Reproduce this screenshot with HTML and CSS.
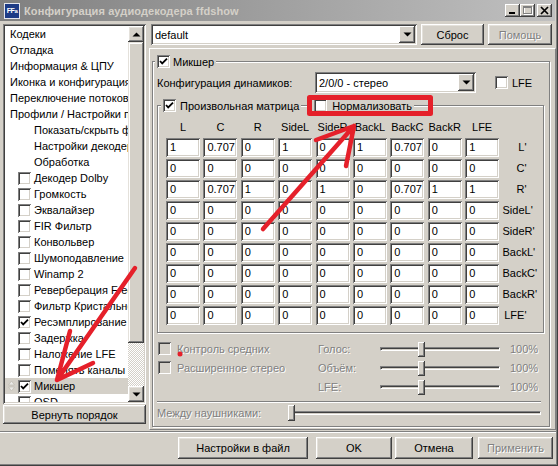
FILE: index.html
```html
<!DOCTYPE html>
<html lang="ru">
<head>
<meta charset="utf-8">
<title>Конфигурация аудиодекодера ffdshow</title>
<link rel="stylesheet" href="styles.css">
</head>
<body>
<div class="window">
  <div class="titlebar">
    <span class="appicon">FF<span class="appicon-a">a</span></span>
    <span class="title">Конфигурация аудиодекодера ffdshow</span>
    <span class="capbtns">
      <span class="capbtn"><svg width="15" height="13" viewBox="0 0 15 13"><rect x="4" y="8" width="6" height="2" fill="#000"/></svg></span>
      <span class="capbtn"><svg width="15" height="13" viewBox="0 0 15 13"><rect x="4.5" y="3.5" width="8" height="7" fill="none" stroke="#fff"/><rect x="3.5" y="2.5" width="8" height="7" fill="none" stroke="#808080"/><rect x="3" y="3" width="9" height="1" fill="#808080"/></svg></span>
      <span class="capbtn close"><svg width="15" height="13" viewBox="0 0 15 13"><path d="M4 3 L11 10 M11 3 L4 10" stroke="#000" stroke-width="1.7"/></svg></span>
    </span>
  </div>

  <div class="main">
    <div class="left">
      <div class="listbox">
        <div class="list">
          <div class="row">Кодеки</div>
          <div class="row">Отладка</div>
          <div class="row">Информация &amp; ЦПУ</div>
          <div class="row">Иконка и конфигурация</div>
          <div class="row">Переключение потоков</div>
          <div class="row">Профили / Настройки пресетов</div>
          <div class="row ind">Показать/скрыть фильтры</div>
          <div class="row ind">Настройки декодера</div>
          <div class="row ind">Обработка</div>
          <div class="row chk"><span class="cb"></span><span>Декодер Dolby</span></div>
          <div class="row chk"><span class="cb"></span><span>Громкость</span></div>
          <div class="row chk"><span class="cb"></span><span>Эквалайзер</span></div>
          <div class="row chk"><span class="cb"></span><span>FIR Фильтр</span></div>
          <div class="row chk"><span class="cb"></span><span>Конвольвер</span></div>
          <div class="row chk"><span class="cb"></span><span>Шумоподавление</span></div>
          <div class="row chk"><span class="cb"></span><span>Winamp 2</span></div>
          <div class="row chk"><span class="cb"></span><span>Реверберация Freeverb</span></div>
          <div class="row chk"><span class="cb"></span><span>Фильтр Кристальности</span></div>
          <div class="row chk"><span class="cb"><svg width="13" height="13" viewBox="0 0 13 13"><path d="M3 6 L5.2 8.4 L10 3.6" fill="none" stroke="#000" stroke-width="1.8"/></svg></span><span>Ресэмплирование</span></div>
          <div class="row chk"><span class="cb"></span><span>Задержка</span></div>
          <div class="row chk"><span class="cb"></span><span>Наложение LFE</span></div>
          <div class="row chk"><span class="cb"></span><span>Поменять каналы местами</span></div>
          <div class="row chk sel"><svg class="grip" width="7" height="14" viewBox="0 0 7 14"><path d="M0.5 6 L3.5 2 L6.5 6 Z M0.5 8 L3.5 12 L6.5 8 Z" fill="#ecebe8" stroke="#bdbab2" stroke-width="0.7"/></svg><span class="cb"><svg width="13" height="13" viewBox="0 0 13 13"><path d="M3 6 L5.2 8.4 L10 3.6" fill="none" stroke="#000" stroke-width="1.8"/></svg></span><span>Микшер</span></div>
          <div class="row chk"><span class="cb"></span><span>OSD</span></div>
        </div>
        <div class="vscroll">
          <div class="sbtn"><svg width="9" height="5" viewBox="0 0 9 5"><path d="M0.5 4.5 L4.5 0.5 L8.5 4.5 Z" fill="#000"/></svg></div>
          <div class="thumb"></div>
          <div class="track"></div>
          <div class="sbtn"><svg width="9" height="5" viewBox="0 0 9 5"><path d="M0.5 0.5 L4.5 4.5 L8.5 0.5 Z" fill="#000"/></svg></div>
        </div>
      </div>
      <div class="btn reorder">Вернуть порядок</div>
    </div>

    <div class="right">
      <div class="toprow">
        <div class="combo preset"><span class="combo-text">default</span><span class="ddbtn"><svg width="9" height="5" viewBox="0 0 9 5"><path d="M0.5 0.5 L4.5 4.5 L8.5 0.5 Z" fill="#000"/></svg></span></div>
        <div class="btn reset">Сброс</div>
        <div class="btn help dis">Помощь</div>
      </div>

      <div class="panel">
        <fieldset class="group mixer">
          <legend class="lg"><span class="lgin"><span class="cb"><svg width="13" height="13" viewBox="0 0 13 13"><path d="M3 6 L5.2 8.4 L10 3.6" fill="none" stroke="#000" stroke-width="1.8"/></svg></span><span>Микшер</span></span></legend>

          <div class="speakers">
            <span class="spk-label">Конфигурация динамиков:</span>
            <div class="combo spk-combo"><span class="combo-text">2/0/0 - стерео</span><span class="ddbtn"><svg width="9" height="5" viewBox="0 0 9 5"><path d="M0.5 0.5 L4.5 4.5 L8.5 0.5 Z" fill="#000"/></svg></span></div>
            <span class="lfe"><span class="cb"></span><span>LFE</span></span>
          </div>

          <fieldset class="group matrix-group">
            <legend class="lg lg2"><span class="lgin">
              <span class="lg-item first"><span class="cb"><svg width="13" height="13" viewBox="0 0 13 13"><path d="M3 6 L5.2 8.4 L10 3.6" fill="none" stroke="#000" stroke-width="1.8"/></svg></span><span>Произвольная матрица</span></span>
              <span class="lg-line"></span>
              <span class="lg-item second"><span class="cb"></span><span>Нормализовать</span></span>
            </span></legend>

            <div class="matrix">
              <div class="mh">L</div><div class="mh">C</div><div class="mh">R</div><div class="mh">SideL</div><div class="mh">SideR</div><div class="mh">BackL</div><div class="mh">BackC</div><div class="mh">BackR</div><div class="mh">LFE</div><div></div>

              <div class="ed">1</div><div class="ed">0.707</div><div class="ed">0</div><div class="ed">1</div><div class="ed">0</div><div class="ed">1</div><div class="ed">0.707</div><div class="ed">0</div><div class="ed">1</div><div class="rl">L'</div>
              <div class="ed">0</div><div class="ed">0</div><div class="ed">0</div><div class="ed">0</div><div class="ed">0</div><div class="ed">0</div><div class="ed">0</div><div class="ed">0</div><div class="ed">0</div><div class="rl">C'</div>
              <div class="ed">0</div><div class="ed">0.707</div><div class="ed">1</div><div class="ed">0</div><div class="ed">1</div><div class="ed">0</div><div class="ed">0.707</div><div class="ed">1</div><div class="ed">1</div><div class="rl">R'</div>
              <div class="ed">0</div><div class="ed">0</div><div class="ed">0</div><div class="ed">0</div><div class="ed">0</div><div class="ed">0</div><div class="ed">0</div><div class="ed">0</div><div class="ed">0</div><div class="rl">SideL'</div>
              <div class="ed">0</div><div class="ed">0</div><div class="ed">0</div><div class="ed">0</div><div class="ed">0</div><div class="ed">0</div><div class="ed">0</div><div class="ed">0</div><div class="ed">0</div><div class="rl">SideR'</div>
              <div class="ed">0</div><div class="ed">0</div><div class="ed">0</div><div class="ed">0</div><div class="ed">0</div><div class="ed">0</div><div class="ed">0</div><div class="ed">0</div><div class="ed">0</div><div class="rl">BackL'</div>
              <div class="ed">0</div><div class="ed">0</div><div class="ed">0</div><div class="ed">0</div><div class="ed">0</div><div class="ed">0</div><div class="ed">0</div><div class="ed">0</div><div class="ed">0</div><div class="rl">BackC'</div>
              <div class="ed">0</div><div class="ed">0</div><div class="ed">0</div><div class="ed">0</div><div class="ed">0</div><div class="ed">0</div><div class="ed">0</div><div class="ed">0</div><div class="ed">0</div><div class="rl">BackR'</div>
              <div class="ed">0</div><div class="ed">0</div><div class="ed">0</div><div class="ed">0</div><div class="ed">0</div><div class="ed">0</div><div class="ed">0</div><div class="ed">0</div><div class="ed">0</div><div class="rl">LFE'</div>
            </div>
          </fieldset>

          <div class="opts">
            <span class="optc"><span class="cb cbdis"></span><span class="dis">Контроль средних</span></span>
            <span class="dis">Голос:</span>
            <span class="slider"><span class="strack"></span><span class="sthumb" style="left:38px"></span></span>
            <span class="dis pct">100%</span>

            <span class="optc"><span class="cb cbdis"></span><span class="dis">Расширенное стерео</span></span>
            <span class="dis">Объём:</span>
            <span class="slider"><span class="strack"></span><span class="sthumb" style="left:38px"></span></span>
            <span class="dis pct">100%</span>

            <span></span>
            <span class="dis">LFE:</span>
            <span class="slider"><span class="strack"></span><span class="sthumb" style="left:38px"></span></span>
            <span class="dis pct">100%</span>
          </div>

          <div class="hsep"></div>

          <div class="hp-row">
            <span class="dis hp-label">Между наушниками:</span>
            <span class="slider hp-slider"><span class="strack"></span><span class="sthumb hp-thumb" style="left:0px"></span></span>
          </div>
        </fieldset>
      </div>
    </div>
  </div>

  <div class="sep"></div>

  <div class="footer">
    <div class="btn fbtn save">Настройки в файл</div>
    <div class="btn fbtn ok">OK</div>
    <div class="btn fbtn cancel">Отмена</div>
    <div class="btn fbtn apply dis">Применить</div>
  </div>

  <svg class="annot" width="558" height="466" viewBox="0 0 558 466">
    <g fill="none" stroke="#e5202a" stroke-linecap="round" stroke-linejoin="round">
      <rect x="309.5" y="97.5" width="121" height="16" stroke-width="5"/>
      <path d="M135 268 L57 380 M57 380 L70 331 M57 380 L93 363" stroke-width="4.5"/>
      <path d="M263 229 L354 126 M354 126 L316 140 M354 126 L346 166" stroke-width="4.5"/>
    </g>
    <circle cx="180" cy="354" r="2.5" fill="#e5202a"/>
  </svg>
</div>
</body>
</html>
```

FILE: styles.css
```css
* { box-sizing: border-box; }
html, body { margin: 0; padding: 0; }
body {
  width: 558px; height: 466px; overflow: hidden;
  background: #d4d0c8;
  font-family: "Liberation Sans", Arial, sans-serif;
  font-size: 11px; color: #000;
}
.window {
  position: relative; width: 558px; height: 466px;
  background: #d4d0c8;
  box-shadow: inset -1px -1px #404040, inset -2px -2px #808080;
  display: flex; flex-direction: column;
}

/* title bar */
.titlebar {
  flex: none; height: 21px; margin-right: 3px;
  display: flex; align-items: center;
  background: linear-gradient(90deg, #808080, #c0c0c0);
}
.appicon {
  width: 16px; height: 16px; margin-left: 4px; flex: none;
  background: #1d3b86; border: 1px solid #e4e6ee; color: #fff;
  font: bold 7px/14px "Liberation Sans", Arial, sans-serif;
  text-align: center; letter-spacing: -0.4px;
}
.appicon-a { font-size: 6px; }
.title { margin-left: 4px; font-weight: bold; color: #d4d0c8; white-space: nowrap; letter-spacing: 0.1px; }
.capbtns { margin-left: auto; margin-right: 3px; display: flex; }
.capbtn {
  width: 15px; height: 13px; display: flex; background: #d4d0c8;
  box-shadow: inset -1px -1px #404040, inset 1px 1px #fff, inset -2px -2px #808080;
}
.capbtn.close { margin-left: 2px; }

/* common widgets */
.btn {
  flex: none; display: flex; align-items: center; justify-content: center;
  white-space: nowrap; background: #d4d0c8;
  box-shadow: inset -1px -1px #404040, inset 1px 1px #fff, inset -2px -2px #808080, inset 2px 2px #e4e1db;
}
.dis { color: #808080; text-shadow: 1px 1px #fff; }
.cb {
  flex: none; width: 13px; height: 13px; display: inline-flex; background: #fff;
  box-shadow: inset 1px 1px #808080, inset -1px -1px #fff, inset 2px 2px #404040, inset -2px -2px #d4d0c8;
}
.cb.cbdis { background: #d4d0c8; }
.combo {
  display: flex; align-items: center; height: 21px; padding: 2px;
  background: #fff;
  box-shadow: inset 1px 1px #808080, inset -1px -1px #fff, inset 2px 2px #404040, inset -2px -2px #d4d0c8;
}
.combo-text { flex: 1; padding-left: 2px; white-space: nowrap; overflow: hidden; }
.ddbtn {
  flex: none; width: 16px; height: 17px; display: flex; align-items: center; justify-content: center;
  background: #d4d0c8;
  box-shadow: inset -1px -1px #404040, inset 1px 1px #fff, inset -2px -2px #808080;
}

/* main area */
.main { flex: none; display: flex; height: 409px; padding: 3px 0 0 3px; }

.left { width: 143px; display: flex; flex-direction: column; }
.listbox {
  height: 380px; display: flex; padding: 2px; background: #fff;
  box-shadow: inset 1px 1px #808080, inset -1px -1px #fff, inset 2px 2px #404040, inset -2px -2px #d4d0c8;
}
.list { flex: 1; min-width: 0; overflow: hidden; }
.row {
  height: 16px; display: flex; align-items: center; gap: 3px;
  padding-left: 5px; white-space: nowrap;
}
.row.ind { padding-left: 29px; }
.row.chk { padding-left: 13px; }
.row.sel { background: #d4d0c8; padding-left: 3px; }
.grip { flex: none; }
.vscroll { width: 16px; flex: none; display: flex; flex-direction: column; }
.sbtn {
  flex: none; height: 16px; display: flex; align-items: center; justify-content: center;
  background: #d4d0c8;
  box-shadow: inset -1px -1px #404040, inset 1px 1px #fff, inset -2px -2px #808080, inset 2px 2px #e4e1db;
}
.thumb {
  flex: none; height: 301px; background: #d4d0c8;
  box-shadow: inset -1px -1px #404040, inset 1px 1px #e4e1db, inset -2px -2px #808080, inset 2px 2px #fff;
}
.track {
  flex: 1;
  background: conic-gradient(#fff 25%, #d4d0c8 0 50%, #fff 0 75%, #d4d0c8 0);
  background-size: 2px 2px;
}
.reorder { margin-top: 1px; height: 19px; }

.right { width: 407px; margin-left: 3px; display: flex; flex-direction: column; }
.toprow { display: flex; height: 21px; padding-left: 2px; }
.preset { width: 266px; }
.reset { width: 63px; margin-left: 4px; height: 21px; }
.help { width: 64px; margin-left: 4px; height: 21px; }

.panel {
  margin-top: 3px; height: 382px;
  border: 1px solid; border-color: #fff #808080 #808080 #fff;
  padding: 6px 0 0 2px;
}
.group {
  margin: 0; min-width: 0;
  border: 1px solid #808080;
  box-shadow: inset 1px 1px #fff, 1px 1px #fff;
}
.mixer { width: 398px; padding: 0 5px 4px 4px; }
.lg { padding: 0 2px; margin-left: -2px; background: #d4d0c8; height: 13px; }
.lgin { display: flex; align-items: center; gap: 3px; height: 13px; white-space: nowrap; }

.speakers { display: flex; align-items: center; margin-top: 4px; height: 21px; }
.spk-label { width: 158px; flex: none; white-space: nowrap; }
.spk-combo { width: 161px; flex: none; }
.lfe { margin-left: 19px; display: flex; align-items: center; gap: 4px; }

.matrix-group { margin-top: 6px; width: 387px; padding: 0 0 7px 8px; }
.lg2 { margin-left: -5px; padding: 0; background: transparent; }
.lg2 .lgin { gap: 0; align-items: flex-start; width: 253px; }
.lg-item { flex: none; display: flex; align-items: center; height: 13px; background: #d4d0c8; white-space: nowrap; }
.lg-item.first { padding: 0 2px; gap: 4px; }
.lg-item.second { padding: 0 2px; gap: 5px; }
.lg-line { flex: 1; min-width: 4px; height: 2px; margin-top: 6px; border-top: 1px solid #808080; border-bottom: 1px solid #fff; }

.matrix {
  margin-top: 7px;
  display: grid;
  grid-template-columns: repeat(9, 34px) 24px;
  grid-template-rows: 17px repeat(9, 19px);
  column-gap: 3.4px; row-gap: 2px;
}
.mh { text-align: center; line-height: 17px; white-space: nowrap; }
.ed {
  background: #fff; padding-left: 4px; line-height: 19px; white-space: nowrap; overflow: hidden;
  box-shadow: inset 1px 1px #808080, inset -1px -1px #fff, inset 2px 2px #404040, inset -2px -2px #d4d0c8;
}
.rl { text-align: right; line-height: 19px; white-space: nowrap; }

.opts {
  margin-top: 6px;
  display: grid;
  grid-template-columns: 161px 62px 122px auto;
  grid-auto-rows: 19px;
  align-items: center;
}
.optc { display: flex; align-items: center; gap: 6px; padding-left: 1px; white-space: nowrap; }
.slider { position: relative; height: 19px; display: flex; align-items: center; padding-right: 2px; }
.strack {
  flex: 1; height: 4px;
  border: 1px solid; border-color: #808080 #fff #fff #808080;
  box-shadow: inset 1px 1px #404040;
}
.sthumb {
  position: absolute; top: 3px; width: 7px; height: 15px; background: #d4d0c8;
  box-shadow: inset -1px -1px #404040, inset 1px 1px #fff, inset -2px -2px #808080;
}
.pct { padding-left: 8px; }

.hsep { margin-top: 5px; margin-right: 3px; height: 2px; border-top: 1px solid #808080; border-bottom: 1px solid #fff; }
.hp-row { margin-top: 1px; height: 18px; display: flex; align-items: center; }
.hp-label { width: 131px; flex: none; white-space: nowrap; }
.hp-slider { flex: 1; height: 18px; margin-right: 1px; }
.hp-thumb { top: 1px; height: 16px; }

/* footer */
.sep { flex: none; margin-top: 1px; margin-right: 2px; height: 2px; border-top: 1px solid #808080; border-bottom: 1px solid #fff; }
.footer { display: flex; justify-content: flex-end; padding-right: 5px; margin-top: 4px; }
.fbtn { height: 22px; }
.save { width: 130px; }
.ok { width: 76px; margin-left: 8px; }
.cancel { width: 78px; margin-left: 3px; }
.apply { width: 75px; margin-left: 5px; }

.annot { position: absolute; left: 0; top: 0; pointer-events: none; }
```
